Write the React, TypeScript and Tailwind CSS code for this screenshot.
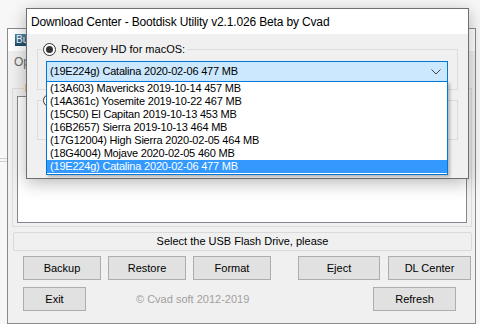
import React from 'react';

const versions = [
  '(13A603) Mavericks 2019-10-14 457 MB',
  '(14A361c) Yosemite 2019-10-22 467 MB',
  '(15C50) El Capitan 2019-10-13 453 MB',
  '(16B2657) Sierra 2019-10-13 464 MB',
  '(17G12004) High Sierra 2020-02-05 464 MB',
  '(18G4004) Mojave 2020-02-05 460 MB',
  '(19E224g) Catalina 2020-02-06 477 MB',
];

const font = { fontFamily: '"Liberation Sans", Arial, sans-serif' };

const WinButton: React.FC<{ label: string; w: string }> = ({ label, w }) => (
  <button
    className={`${w} h-[24px] bg-[#e1e1e1] border border-[#adadad] text-[11px] text-black leading-none`}
  >
    {label}
  </button>
);

const Radio: React.FC<{ checked?: boolean }> = ({ checked }) => (
  <span className="w-[13px] h-[13px] rounded-full border border-[#333] bg-white flex items-center justify-center shrink-0">
    {checked && <span className="w-[7px] h-[7px] rounded-full bg-[#333]" />}
  </span>
);

// background: the main Bootdisk Utility window
const MainWindow = () => (
  <div className="absolute left-[7px] top-[28px] w-[469px] h-[296px] border border-[#8a8a8a] bg-[#f0f0f0] flex flex-col">
    <div className="h-[22px] bg-white flex items-center px-[7px] shrink-0">
      <div className="w-[40px] h-[12px] bg-gradient-to-b from-[#4f87a8] to-[#1d4a66] text-white text-[10px] leading-[12px] pl-[1px]">
        Bu
      </div>
      <div className="flex-1" />
      <span className="text-[#777] text-[11px] mr-[1px]">✕</span>
    </div>
    <div className="h-[21px] flex items-end pl-[6px] pb-[1px] text-[12px] text-[#6b6b6b] shrink-0">Options</div>
    <div className="mt-[16px] ml-[4px] w-[460px] h-[139px] border border-[#dcdcdc] relative px-[4px] pt-[7px] shrink-0">
      <span className="absolute left-[11px] top-[-7px] bg-[#f0f0f0] px-[1px] text-[11px] leading-[13px] text-black">
        Drive
      </span>
      <div className="w-[450px] h-[127px] bg-white border border-[#828790]" />
    </div>
    <div className="mt-[5px] ml-[5px] w-[459px] h-[19px] border border-[#dadada] rounded-[2px] bg-[#f0f0f0] flex items-center justify-center text-[11px] text-black shrink-0">
      Select the USB Flash Drive, please
    </div>
    <div className="mt-[5px] ml-[15px] flex shrink-0">
      <WinButton label="Backup" w="w-[78px]" />
      <div className="w-[7px]" />
      <WinButton label="Restore" w="w-[78px]" />
      <div className="w-[7px]" />
      <WinButton label="Format" w="w-[78px]" />
      <div className="w-[27px]" />
      <WinButton label="Eject" w="w-[82px]" />
      <div className="w-[8px]" />
      <WinButton label="DL Center" w="w-[83px]" />
    </div>
    <div className="mt-[7px] ml-[15px] flex items-center shrink-0">
      <WinButton label="Exit" w="w-[63px]" />
      <span className="ml-[50px] w-[202px] text-[11px] text-[#a0a0a0]">© Cvad soft 2012-2019</span>
      <div className="w-[35px]" />
      <WinButton label="Refresh" w="w-[83px]" />
    </div>
  </div>
);

// foreground: the Download Center dialog
const DownloadDialog = () => (
  <div className="absolute left-[26px] top-[8px] w-[443px] h-[171px] border border-[#6f6f6f] bg-[#f0f0f0] shadow-[0_4px_16px_rgba(0,0,0,0.28)] flex flex-col">
    <div className="h-[25px] bg-white flex items-center pl-[4px] text-[12px] tracking-[-0.15px] text-black shrink-0">
      Download Center - Bootdisk Utility v2.1.026 Beta by Cvad
    </div>
    <div className="flex flex-col pl-[10px] pt-[15px]">
      <div className="w-[421px] h-[41px] border border-[#dcdcdc] relative">
        <div className="absolute left-[5px] top-[-7px] flex items-center gap-[5px] bg-[#f0f0f0] pr-[2px]">
          <Radio checked />
          <span className="text-[11px] leading-[13px] text-black">Recovery HD for macOS:</span>
        </div>
        <div className="absolute left-[8px] top-[11px] w-[402px] h-[21px] border border-[#0078d7] bg-[#cce8ff] flex items-center pl-[3px] text-[11px] tracking-[-0.2px] text-black">
          <span className="flex-1">(19E224g) Catalina 2020-02-06 477 MB</span>
          <svg width="10" height="6" viewBox="0 0 10 6" className="mr-[6px]">
            <path d="M0.5 0.5 L5 5 L9.5 0.5" fill="none" stroke="#444" strokeWidth="1" />
          </svg>
        </div>
      </div>
      <div className="mt-[10px] w-[421px] h-[40px] border border-[#dcdcdc] relative">
        <div className="absolute left-[5px] top-[-7px] bg-[#f0f0f0]">
          <Radio />
        </div>
      </div>
    </div>
  </div>
);

const DropList = () => (
  <div className="absolute left-[46px] top-[81px] w-[402px] h-[94px] border border-[#0078d7] bg-white shadow-[2px_2px_3px_rgba(0,0,0,0.25)] flex flex-col">
    {versions.map((v, i) => (
      <div
        key={v}
        className={`h-[13px] leading-[13px] pl-[3px] text-[11px] tracking-[-0.2px] ${
          i === versions.length - 1 ? 'bg-[#3399ff] text-white' : 'text-black'
        }`}
      >
        {v}
      </div>
    ))}
  </div>
);

export default function App() {
  return (
    <div className="relative w-[480px] h-[324px] overflow-hidden bg-[#f7f7f7]" style={font}>
      <div className="absolute left-0 top-[158px] w-[7px] h-[4px] border-y border-[#d0d0d0]" />
      <MainWindow />
      <DownloadDialog />
      <DropList />
    </div>
  );
}
